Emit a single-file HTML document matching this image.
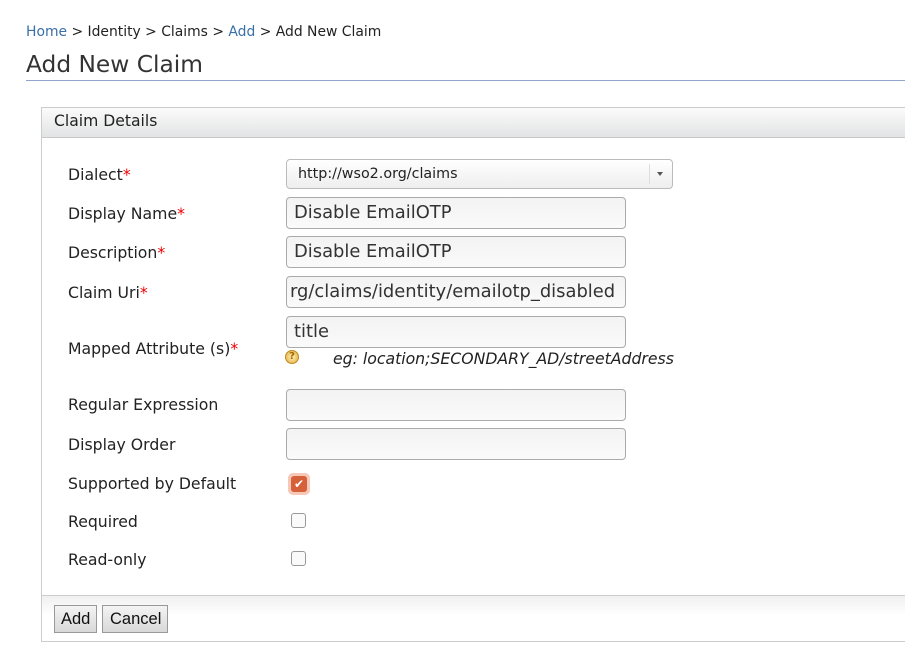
<!DOCTYPE html>
<html><head><meta charset="utf-8"><style>
*{box-sizing:border-box;margin:0;padding:0}
body{width:905px;height:646px;background:#fff;font-family:"DejaVu Sans","Liberation Sans",sans-serif;color:#222;position:relative;overflow:hidden}
.a{position:absolute;white-space:nowrap}
.bc{left:26px;top:24px;font-size:13.9px;color:#222}
.bc span{color:#3a6fa8}
.h1{left:26px;top:51px;font-size:23.3px;color:#333}
.rule{left:26px;top:80px;width:879px;height:1px;background:#8fa6cc}
.panel{left:41px;top:107px;width:880px;height:535px;border:1px solid #ccc;background:#fff}
.ph{left:42px;top:108px;width:870px;height:30px;background:linear-gradient(#fbfbfb,#e2e3e4);border-bottom:1px solid #c8c8c8;font-size:15.6px;padding:4px 0 0 12px}
.pf{left:42px;top:595px;width:870px;height:46px;border-top:1px solid #ccc;background:linear-gradient(#f0f0f0,#fff 20px)}
.lb{left:68px;font-size:15.7px;color:#222}
.lb b{color:#e00;font-weight:normal}
.in{left:286px;width:340px;height:32px;border:1px solid #aaa;border-radius:4px;background:linear-gradient(#f3f3f3,#fafafa);font-size:17.9px;padding:4px 0 0 7px;overflow:hidden;color:#333}
.sel{left:286px;top:159px;width:387px;height:30px;border:1px solid #bbb;border-radius:4px;background:linear-gradient(#fff,#eee);font-size:14.3px;padding:6px 0 0 11px}
.sel:after{content:"";position:absolute;right:22px;top:4px;width:1px;height:20px;background:#ddd}
.tri{position:absolute;right:9px;top:12px;border-left:3px solid transparent;border-right:3px solid transparent;border-top:4px solid #555}
.cb{left:291px;width:15px;height:15px;border:1px solid #999;border-radius:3px;background:#fafafa}
.btn{top:605px;height:28px;border:1px solid #999;background:linear-gradient(#f4f4f4,#d8d8d8);font-family:"Liberation Sans",sans-serif;font-size:16.5px;padding:4px 0 0 6px;color:#111}
</style></head><body>
<div class="a bc"><span>Home</span> &gt; Identity &gt; Claims &gt; <span>Add</span> &gt; Add New Claim</div>
<div class="a h1">Add New Claim</div>
<div class="a rule"></div>
<div class="a panel"></div>
<div class="a ph">Claim Details</div>
<div class="a pf"></div>

<div class="a lb" style="top:165px">Dialect<b>*</b></div>
<div class="a lb" style="top:204px">Display Name<b>*</b></div>
<div class="a lb" style="top:243px">Description<b>*</b></div>
<div class="a lb" style="top:283px">Claim Uri<b>*</b></div>
<div class="a lb" style="top:339px">Mapped Attribute (s)<b>*</b></div>
<div class="a lb" style="top:395px">Regular Expression</div>
<div class="a lb" style="top:435px">Display Order</div>
<div class="a lb" style="top:474px">Supported by Default</div>
<div class="a lb" style="top:512px">Required</div>
<div class="a lb" style="top:550px">Read-only</div>

<div class="a sel">http://wso2.org/claims<div class="tri"></div></div>
<div class="a in" style="top:197px">Disable EmailOTP</div>
<div class="a in" style="top:236px">Disable EmailOTP</div>
<div class="a in" style="top:276px;padding-left:3px">rg/claims/identity/emailotp_disabled</div>
<div class="a in" style="top:316px">title</div>
<div class="a" style="left:285px;top:350px;width:14px;height:14px;border-radius:50%;background:radial-gradient(#fff3c0,#e0a830);border:1px solid #c08a20;font-size:10px;color:#a06a00;text-align:center;line-height:12px;font-weight:bold">?</div>
<div class="a" style="left:333px;top:349px;font-size:15.7px;font-style:italic;color:#222">eg: location;SECONDARY_AD/streetAddress</div>
<div class="a in" style="top:389px"></div>
<div class="a in" style="top:428px"></div>

<div class="a" style="left:288px;top:473px;width:22px;height:22px;border-radius:5px;background:#f6c8b8"></div>
<div class="a" style="left:291px;top:476px;width:16px;height:16px;border-radius:3px;background:#d5603a;color:#fff;font-size:12px;text-align:center;line-height:16px">✔</div>
<div class="a cb" style="top:513px"></div>
<div class="a cb" style="top:551px"></div>

<div class="a btn" style="left:54px;width:43px">Add</div>
<div class="a btn" style="left:102px;width:66px;padding-left:7px">Cancel</div>
</body></html>
